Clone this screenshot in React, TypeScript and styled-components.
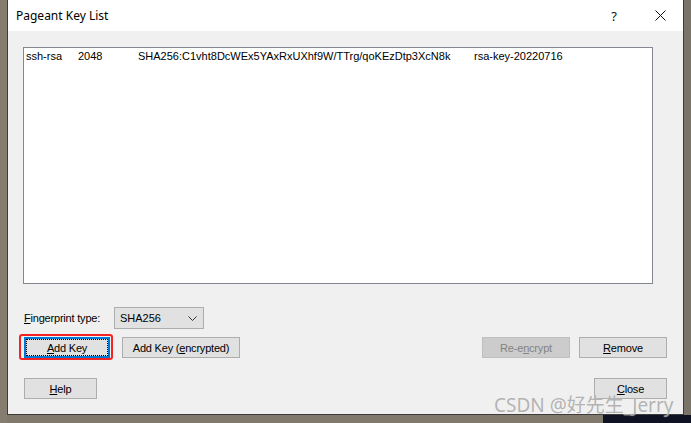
import React from "react";
import styled, { createGlobalStyle } from "styled-components";

const Global = createGlobalStyle`
  html, body { margin: 0; padding: 0; }
  body { background: #7f776b; overflow: hidden; }
`;

const Desktop = styled.div`
  width: 691px;
  height: 423px;
  position: relative;
  overflow: hidden;
  background: #81796c;
  display: flex;
  align-items: flex-start;
`;

const LeftStrip = styled.div`
  width: 7px;
  height: 423px;
  flex: none;
  background: #867d70;
`;

const RightStrip = styled.div`
  flex: 1;
  height: 423px;
  background: #7a7468;
`;

const BottomDark = styled.div`
  position: absolute;
  left: 603px;
  top: 415px;
  width: 88px;
  height: 8px;
  background: #0f1222;
`;

const Window = styled.div`
  width: 677px;
  height: 415px;
  box-sizing: border-box;
  border: 1px solid #3c3c3c;
  border-top: none;
  background: #f0f0f0;
  display: flex;
  flex-direction: column;
  flex: none;
  position: relative;
  font-family: "Liberation Sans", Arial, sans-serif;
  font-size: 11px;
  color: #000;
`;

const TitleBar = styled.div`
  height: 31px;
  background: #fff;
  display: flex;
  align-items: center;
  padding-left: 8px;
  flex: none;
`;

const Title = styled.div`
  font-family: "Noto Sans", "Open Sans", sans-serif;
  font-size: 12px;
  color: #000;
  flex: 1;
  padding-bottom: 1px;
`;

const TitleButton = styled.div<{ $w: number }>`
  width: ${(p) => p.$w}px;
  height: 31px;
  display: flex;
  align-items: center;
  justify-content: center;
  font-family: "Noto Sans", sans-serif;
  font-size: 13px;
  color: #111;
`;

const Client = styled.div`
  flex: 1;
  display: flex;
  flex-direction: column;
  padding: 16px 16px 0 15px;
`;

const ListBox = styled.div`
  width: 630px;
  height: 237px;
  box-sizing: border-box;
  border: 1px solid #828790;
  background: #fff;
  padding: 1px 2px;
`;

const Row = styled.div`
  display: flex;
  height: 14px;
  align-items: center;
  white-space: nowrap;
`;

const Cell = styled.div<{ $w: number }>`
  width: ${(p) => p.$w}px;
  flex: none;
`;

const FpRow = styled.div`
  display: flex;
  align-items: center;
  margin-top: 23px;
  height: 22px;
`;

const Label = styled.div`
  width: 90px;
  padding-left: 1px;
  letter-spacing: -0.2px;
`;

const Combo = styled.div`
  width: 90px;
  height: 22px;
  box-sizing: border-box;
  border: 1px solid #adadad;
  background: #e1e1e1;
  display: flex;
  align-items: center;
  padding: 0 6px 0 5px;
  justify-content: space-between;
`;

const ButtonRow = styled.div<{ $mt: number }>`
  display: flex;
  align-items: center;
  margin-top: ${(p) => p.$mt}px;
  margin-left: 1px;
  gap: 12px;
`;

const Group = styled.div`
  display: flex;
  gap: 9px;
`;

const Spacer = styled.div`
  flex: 1;
`;

const Btn = styled.div<{ $w: number; $disabled?: boolean; $focus?: boolean }>`
  width: ${(p) => p.$w}px;
  height: 21px;
  box-sizing: border-box;
  border: ${(p) => (p.$focus ? "2px solid #0078d7" : p.$disabled ? "1px solid #bfbfbf" : "1px solid #adadad")};
  background: ${(p) => (p.$disabled ? "#cccccc" : "#e1e1e1")};
  color: ${(p) => (p.$disabled ? "#838383" : "#000")};
  display: flex;
  align-items: center;
  justify-content: center;
  position: relative;
  white-space: nowrap;
  letter-spacing: -0.2px;
`;

const FocusRect = styled.div`
  position: absolute;
  inset: 0px;
  border: 1px dotted #000;
`;

const Mark = styled.div`
  position: absolute;
  left: -7px;
  top: -5px;
  right: -5px;
  bottom: -4px;
  border: 2px solid #f42222;
  border-radius: 3px;
`;

const Watermark = styled.div`
  position: absolute;
  left: 494px;
  top: 390px;
  font-family: "Noto Sans", "Noto Sans CJK SC", sans-serif;
  font-size: 19px;
  color: rgba(160, 160, 160, 0.8);
  white-space: nowrap;
  text-shadow: 0 0 1px rgba(255, 255, 255, 0.6);
`;

const U = styled.span`
  text-decoration: underline;
  text-underline-offset: 1px;
`;

export default function App() {
  return (
    <Desktop>
      <Global />
      <LeftStrip />
      <Window>
        <TitleBar>
          <Title>Pageant Key List</Title>
          <TitleButton $w={46}>?</TitleButton>
          <TitleButton $w={46}>
            <svg width="11" height="11" viewBox="0 0 11 11">
              <path d="M0.5 0.5 L10.5 10.5 M10.5 0.5 L0.5 10.5" stroke="#111" strokeWidth="1" fill="none" />
            </svg>
          </TitleButton>
        </TitleBar>
        <Client>
          <ListBox>
            <Row>
              <Cell $w={52}>ssh-rsa</Cell>
              <Cell $w={60}>2048</Cell>
              <Cell $w={336}>SHA256:C1vht8DcWEx5YAxRxUXhf9W/TTrg/qoKEzDtp3XcN8k</Cell>
              <Cell $w={120}>rsa-key-20220716</Cell>
            </Row>
          </ListBox>
          <FpRow>
            <Label>
              <U>F</U>ingerprint type:
            </Label>
            <Combo>
              <span>SHA256</span>
              <svg width="9" height="5" viewBox="0 0 9 5">
                <path d="M0.5 0.5 L4.5 4.5 L8.5 0.5" stroke="#333" strokeWidth="1" fill="none" />
              </svg>
            </Combo>
          </FpRow>
          <ButtonRow $mt={8}>
            <Btn $w={86} $focus>
              <FocusRect />
              <span>
                <U>A</U>dd Key
              </span>
              <Mark />
            </Btn>
            <Btn $w={118}>
              <span>
                Add Key (<U>e</U>ncrypted)
              </span>
            </Btn>
            <Spacer />
            <Group>
              <Btn $w={88} $disabled>
                <span>
                  Re-e<U>n</U>crypt
                </span>
              </Btn>
              <Btn $w={88}>
                <span>
                  <U>R</U>emove
                </span>
              </Btn>
            </Group>
          </ButtonRow>
          <ButtonRow $mt={20}>
            <Btn $w={73}>
              <span>
                <U>H</U>elp
              </span>
            </Btn>
            <Spacer />
            <Btn $w={73}>
              <span>
                <U>C</U>lose
              </span>
            </Btn>
          </ButtonRow>
        </Client>
      </Window>
      <RightStrip />
      <BottomDark />
      <Watermark>CSDN @好先生_Jerry</Watermark>
    </Desktop>
  );
}
